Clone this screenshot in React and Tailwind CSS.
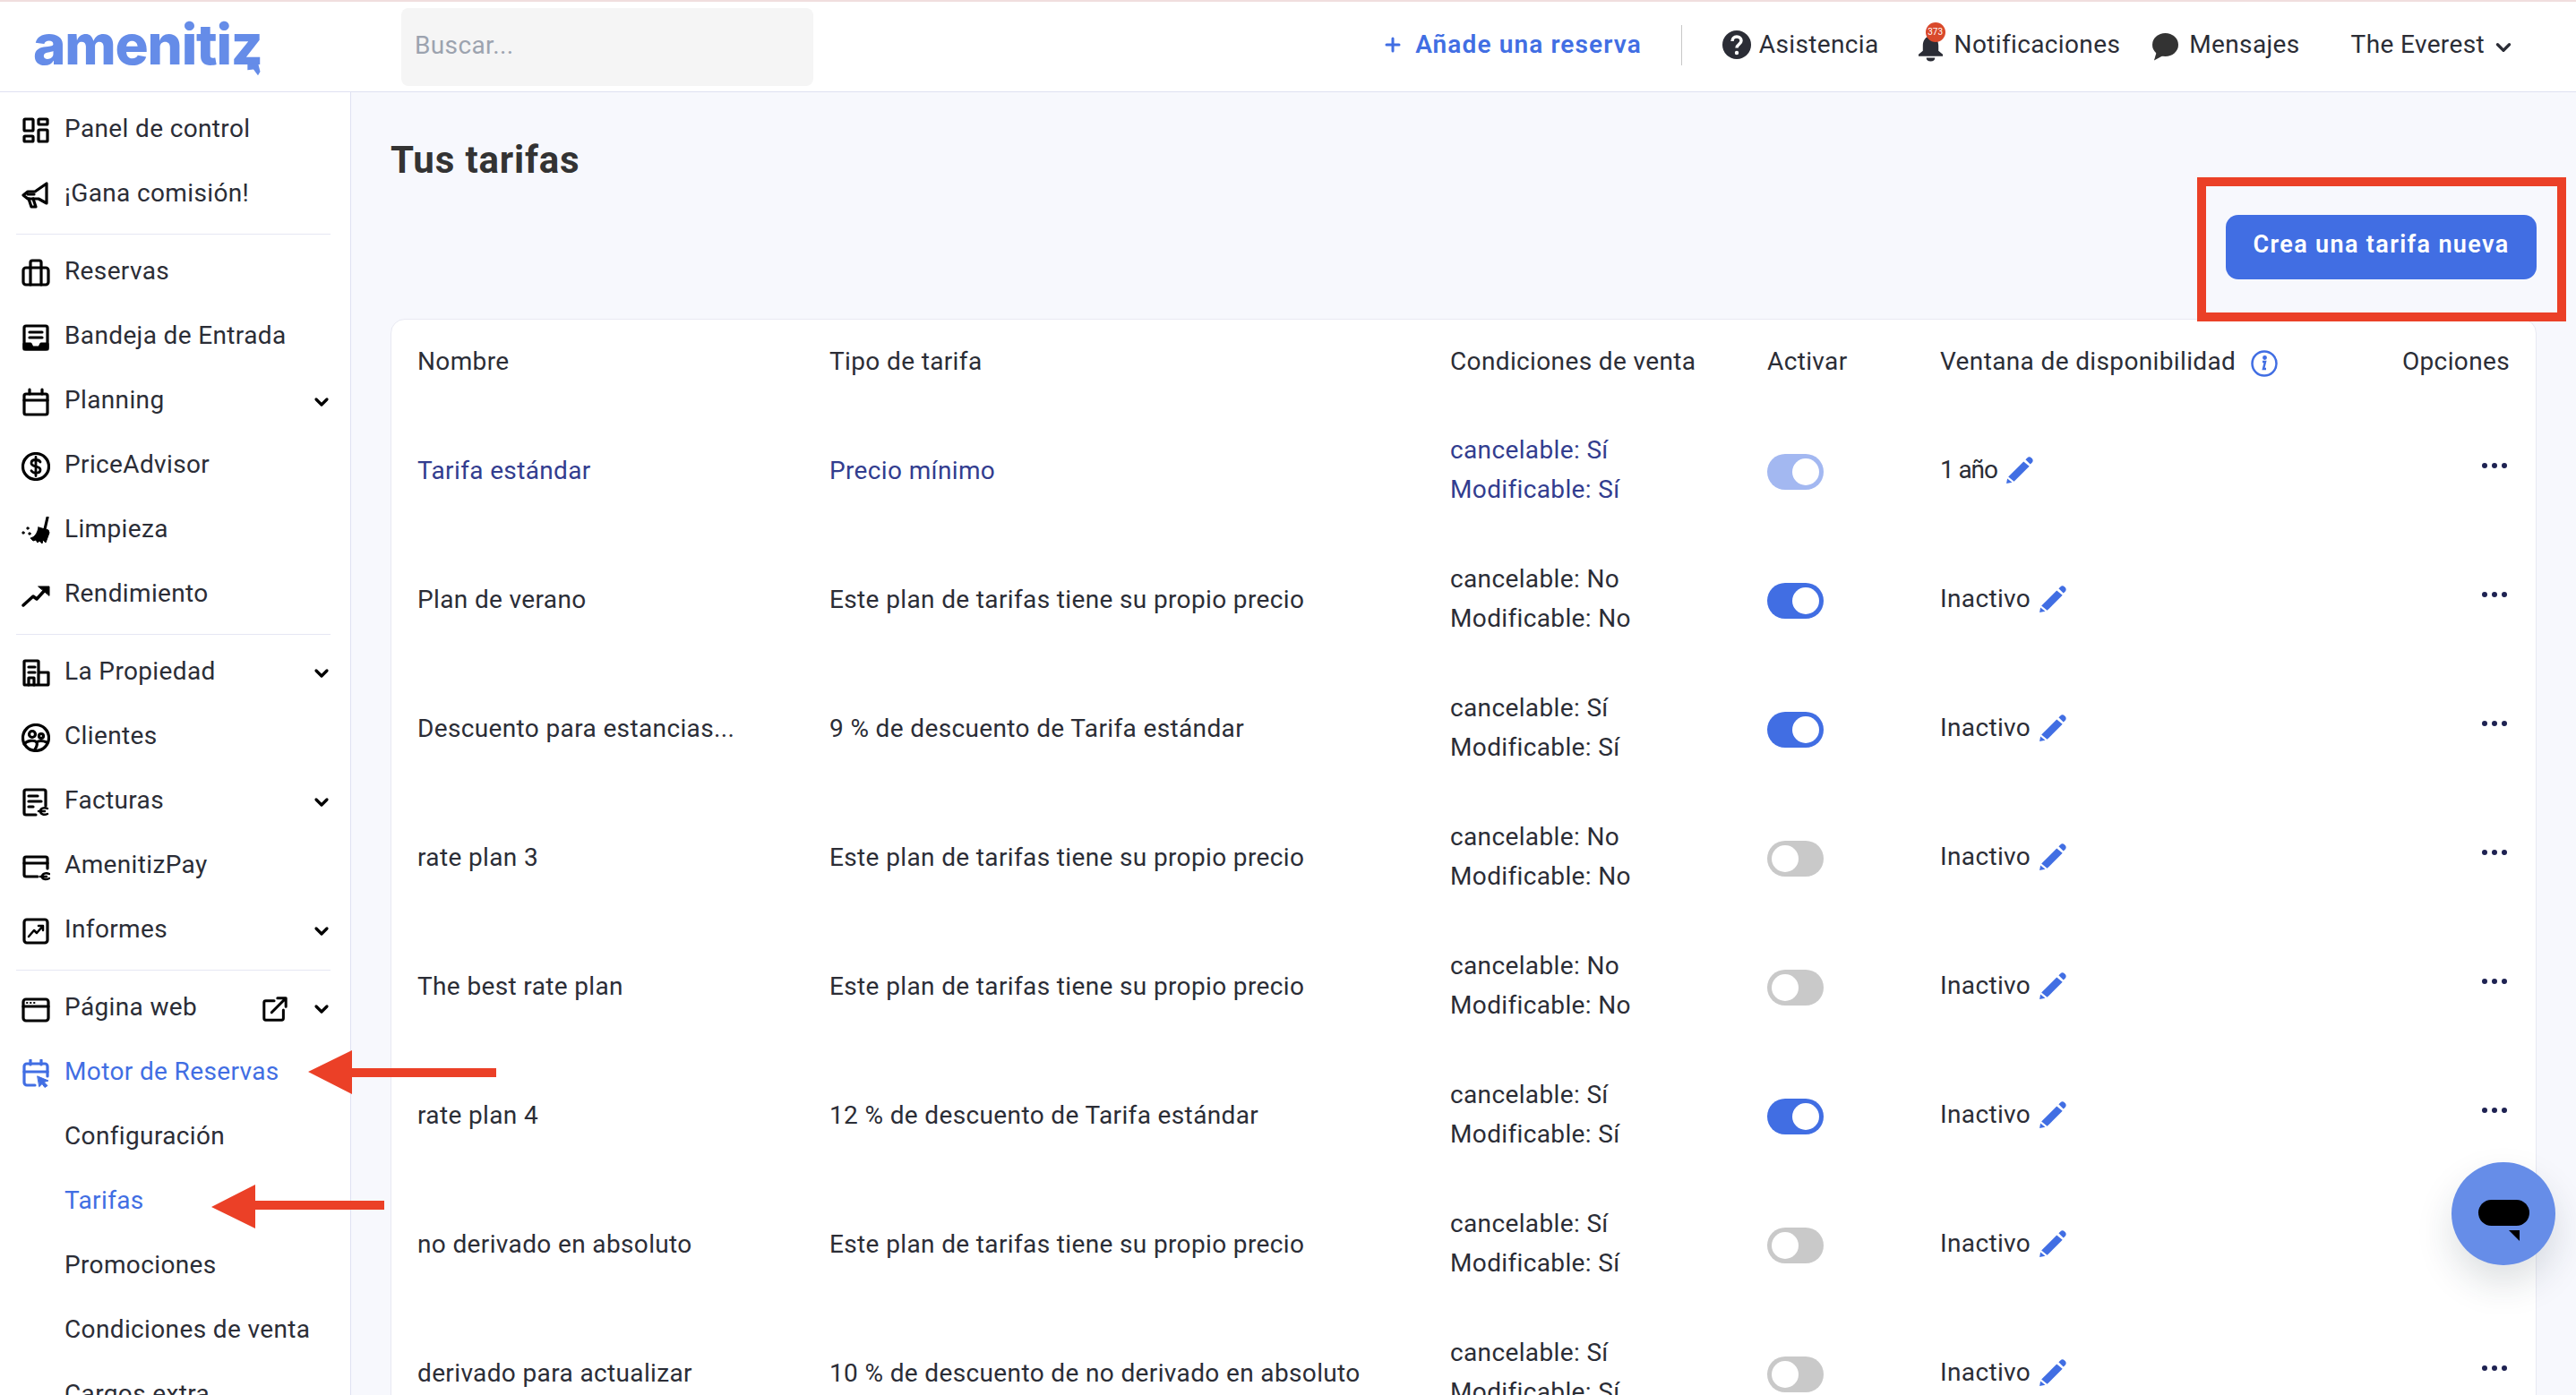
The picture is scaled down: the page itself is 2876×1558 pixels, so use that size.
import { ChevronDown, Plus } from "lucide-react"

const Icon = ({ children, className = "" }) => (
  <svg viewBox="0 0 32 32" fill="none" stroke="currentColor" strokeWidth="3.200" strokeLinejoin="round" strokeLinecap="round" className={"w-[32px] h-[32px] shrink-0 " + className}>
    {children}
  </svg>
)

const icons = {
  panel: (
    <Icon>
      <rect x="3" y="3" width="10" height="13" rx="1" />
      <rect x="19" y="3" width="10" height="6" rx="1" />
      <rect x="3" y="22" width="10" height="6" rx="1" />
      <rect x="19" y="15" width="10" height="13" rx="1" />
    </Icon>
  ),
  gana: (
    <Icon>
      <path d="M28 3v22l-9-5H7l-5-4 5-4h8z" />
      <path d="M8 20l3 9h5l-3-9" />
      <path d="M7 15h7" />
    </Icon>
  ),
  reservas: (
    <Icon>
      <rect x="2" y="10" width="28" height="19" rx="3" />
      <path d="M10 10V4a2 2 0 0 1 2-2h8a2 2 0 0 1 2 2v6M10 10v19M22 10v19" />
    </Icon>
  ),
  bandeja: (
    <Icon>
      <rect x="3" y="3" width="26" height="26" rx="2" />
      <path d="M9 10h14M9 16h14" />
      <path d="M3 23h7l2 4h8l2-4h7v6H3z" fill="currentColor" />
    </Icon>
  ),
  planning: (
    <Icon>
      <rect x="3" y="7" width="26" height="23" rx="2" />
      <path d="M3 14h26M9 2v5M23 2v5" />
    </Icon>
  ),
  price: (
    <Icon>
      <circle cx="16" cy="16" r="14.500" />
      <path d="M21 11c-1-2-3-2.500-5-2.500-3 0-5 1.500-5 3.700 0 5 10 2.500 10 7.500 0 2.200-2 3.500-5 3.500-2.500 0-4-1-5-2.500M16 5.500v21" strokeWidth="2.800" />
    </Icon>
  ),
  limpieza: (
    <Icon>
      <path d="M29 1l-3 13" />
      <path d="M19 12l11 3 1 3-4 11-3-3-1 4-3-3-2 2-2-3-3 1-3-3c5-1 8-6 9-12z" fill="currentColor" strokeWidth="1" />
      <circle cx="2" cy="18" r="1.200" fill="currentColor" strokeWidth="1" />
      <circle cx="7" cy="13" r="1.200" fill="currentColor" strokeWidth="1" />
      <circle cx="9" cy="19" r="1.200" fill="currentColor" strokeWidth="1" />
    </Icon>
  ),
  rendimiento: (
    <Icon>
      <path d="M2 27l11-10 4 3 11-12" strokeWidth="3.500" />
      <path d="M19 6h12v10z" fill="currentColor" strokeWidth="1" />
    </Icon>
  ),
  propiedad: (
    <Icon>
      <path d="M19 29V3a1 1 0 0 0-1-1H4a1 1 0 0 0-1 1v25a1 1 0 0 0 1 1h25a1 1 0 0 0 1-1V15H19" />
      <path d="M8 9h7M8 15h7M8 29v-8h6v8" />
    </Icon>
  ),
  clientes: (
    <Icon>
      <circle cx="16" cy="16" r="14.500" />
      <circle cx="12" cy="12" r="3.500" />
      <circle cx="22" cy="14" r="2.500" />
      <path d="M3 23c3-4 11-5 14-2 2-2 7-2 11 0M17 21c1 3 0 5-2 8" />
    </Icon>
  ),
  facturas: (
    <Icon>
      <path d="M27 20V4a2 2 0 0 0-2-2H5a2 2 0 0 0-2 2v24a2 2 0 0 0 2 2h11" />
      <path d="M8 9h10M8 15h14M8 21h5" />
      <path d="M29 23c-4-2-8 0-8 3s4 5 8 3M19 26h7" strokeWidth="2.500" />
    </Icon>
  ),
  pay: (
    <Icon>
      <path d="M18 27H5a2 2 0 0 1-2-2V7a2 2 0 0 1 2-2h22a2 2 0 0 1 2 2v11" />
      <path d="M3 12h26" />
      <path d="M31 24c-4-2-8 0-8 3s4 4 8 2M21 27h7" strokeWidth="2.500" />
    </Icon>
  ),
  informes: (
    <Icon>
      <rect x="3" y="3" width="26" height="26" rx="3" />
      <path d="M8 22l6-7 3 3 7-8M19 10h5v5" strokeWidth="2.500" />
    </Icon>
  ),
  web: (
    <Icon>
      <rect x="2" y="5" width="28" height="24" rx="3" />
      <path d="M2 13h28" />
      <path d="M6 9h.5M10 9h.5M14 9h.5" strokeWidth="2" />
    </Icon>
  ),
  motor: (
    <Icon>
      <path d="M15 29H6a3 3 0 0 1-3-3V8a3 3 0 0 1 3-3h20a3 3 0 0 1 3 3v11" />
      <path d="M3 14h26M10 1v5M22 1v5" />
      <path d="M18 19l12 5-5 1.500 4 4-3 2-3-4-3 3z" fill="currentColor" strokeWidth="1" />
    </Icon>
  ),
}

const SideItem = ({ icon, label, chevron, external, active, sub }) => (
  <div className={"h-[72px] flex items-center pr-[20px] " + (sub ? "pl-[72px] " : "pl-[24px] ") + (active ? "text-[#416ee3]" : "text-[#2b2d36]")}>
    {!sub && <span className={"w-[48px] flex translate-y-[3px] " + (active ? "" : "text-black")}>{icons[icon]}</span>}
    <span className="flex-1 whitespace-nowrap translate-y-[1px]">{label}</span>
    {external && (
      <svg viewBox="0 0 32 32" fill="none" stroke="black" strokeWidth="3.200" strokeLinecap="round" strokeLinejoin="round" className="w-[30px] h-[30px] mr-[25px] translate-y-[3px]">
        <path d="M15 6H5a2 2 0 0 0-2 2v19a2 2 0 0 0 2 2h19a2 2 0 0 0 2-2V17" />
        <path d="M12 20L29 3M19 3h10v10" />
      </svg>
    )}
    {chevron && <ChevronDown className="w-[24px] h-[24px] shrink-0 text-black translate-y-[3px]" strokeWidth={3.2} />}
  </div>
)

const Divider = () => <div className="h-px bg-[#e6e7f3] ml-[18px] mr-[22px] mt-[10px] mb-[4px]" />

const Pencil = () => (
  <svg viewBox="0 0 30 30" className="w-[32px] h-[32px] shrink-0 text-[#416ee3]" fill="currentColor">
    <path d="M3 22L19 6l6 5L9 27z" />
    <path d="M21 4l2-2c1-1 3-1 4 0l1 1c1 1 1 3 0 4l-2 2z" />
    <path d="M1 29l1-5 5 4z" />
  </svg>
)

const Toggle = ({ state }) => {
  const bg = state === "on" ? "bg-[#416ee3] justify-end" : state === "light" ? "bg-[#a3b8f1] justify-end" : "bg-[#c9c9c9] justify-start"
  return (
    <div className={"w-[63px] h-[40px] rounded-full flex items-center px-[5px] translate-y-[2px] " + bg}>
      <div className="w-[30px] h-[30px] rounded-full bg-white" />
    </div>
  )
}

const Dots = () => (
  <div className="flex gap-[5px] justify-end pr-[3px] -translate-y-[5px]">
    <span className="w-[6px] h-[6px] rounded-full bg-[#1e2252]" />
    <span className="w-[6px] h-[6px] rounded-full bg-[#1e2252]" />
    <span className="w-[6px] h-[6px] rounded-full bg-[#1e2252]" />
  </div>
)

const OWN = "Este plan de tarifas tiene su propio precio"

const rates = [
  { name: "Tarifa estándar", type: "Precio mínimo", cond: "Sí", toggle: "light", window: "1 año", link: true },
  { name: "Plan de verano", type: OWN, cond: "No", toggle: "on", window: "Inactivo" },
  { name: "Descuento para estancias...", type: "9 % de descuento de Tarifa estándar", cond: "Sí", toggle: "on", window: "Inactivo" },
  { name: "rate plan 3", type: OWN, cond: "No", toggle: "off", window: "Inactivo" },
  { name: "The best rate plan", type: OWN, cond: "No", toggle: "off", window: "Inactivo" },
  { name: "rate plan 4", type: "12 % de descuento de Tarifa estándar", cond: "Sí", toggle: "on", window: "Inactivo" },
  { name: "no derivado en absoluto", type: OWN, cond: "Sí", toggle: "off", window: "Inactivo" },
  { name: "derivado para actualizar", type: "10 % de descuento de no derivado en absoluto", cond: "Sí", toggle: "off", window: "Inactivo" },
]

const COLS = "grid grid-cols-[460px_693px_354px_193px_1fr] items-center pl-[29px] pr-[29px]"

export default function App() {
  return (
    <div className="relative h-screen overflow-hidden bg-[#f7f8fd] text-[#2b2d36] font-['Roboto',sans-serif] text-[28px] tracking-[0.013em]">
      <div className="h-[2px] bg-[#f0dede]" />

      {/* top bar */}
      <header className="h-[101px] bg-white border-b border-[#dfe1f2] flex items-center pr-[68px]">
        <div className="w-[448px] pl-[37px] -translate-y-[1px]">
          <span className="relative inline-block text-[#658ce8] font-['Inter',sans-serif] font-extrabold text-[62px] leading-none tracking-[-0.02em]">
            amenitiz
            <svg viewBox="0 0 24 24" className="absolute right-0 bottom-[-4px] w-[20px] h-[20px]" fill="#658ce8">
              <path d="M4 8l14-2 3 12-3 5-6-8-8 1z" />
            </svg>
          </span>
        </div>
        <div className="w-[460px] h-[87px] bg-[#f5f5f5] rounded-[8px] flex items-center pl-[15px] pb-[3px] text-[#9ca3af]">Buscar...</div>
        <div className="ml-auto flex items-center -translate-y-[2px]">
          <Plus className="w-[24px] h-[24px] text-[#416ee3] mr-[13px]" strokeWidth={3} />
          <span className="text-[#416ee3] font-semibold tracking-[0.04em] mr-[44px]">Añade una reserva</span>
          <div className="w-px h-[45px] bg-[#c8c8c8] mr-[45px]" />
          <svg viewBox="0 0 32 32" className="w-[32px] h-[32px] mr-[9px]">
            <circle cx="16" cy="16" r="16" fill="#2b2d36" />
            <path d="M11 12c0-3 2-5 5-5s5 2 5 4.500c0 4-5 4-5 8" fill="none" stroke="white" strokeWidth="3.500" />
            <circle cx="16" cy="25" r="2.200" fill="white" />
          </svg>
          <span className="mr-[43px]">Asistencia</span>
          <span className="relative mr-[12px] flex">
            <svg viewBox="0 0 30 32" className="w-[29px] h-[32px] translate-y-[3px]" fill="#2b2d36">
              <path d="M15 3c6 0 9 5 9 11v6l5 4v2H1v-2l5-4v-6c0-6 3-11 9-11z" />
              <path d="M10 28h10c0 3-2 4-5 4s-5-1-5-4z" />
            </svg>
            <span className="absolute -top-[9px] left-[9px] w-[22px] h-[22px] rounded-full bg-[#d9492b] text-white text-[10px] leading-[22px] text-center tracking-normal">373</span>
          </span>
          <span className="mr-[36px]">Notificaciones</span>
          <svg viewBox="0 0 30 32" className="w-[29px] h-[32px] mr-[12px] translate-y-[2px]" fill="#333333">
            <ellipse cx="15" cy="14" rx="15" ry="13.500" />
            <path d="M5 22L2 32l11-6z" />
          </svg>
          <span className="mr-[57px]">Mensajes</span>
          <span className="mr-[8px]">The Everest</span>
          <ChevronDown className="w-[26px] h-[26px] text-[#2b2d36] translate-y-[3px]" strokeWidth={3} />
        </div>
      </header>

      <div className="flex h-[1455px]">
        {/* sidebar */}
        <aside className="w-[392px] shrink-0 bg-white border-r border-[#dfe1f2] pt-[4px] overflow-hidden">
          <SideItem icon="panel" label="Panel de control" />
          <SideItem icon="gana" label="¡Gana comisión!" />
          <Divider />
          <SideItem icon="reservas" label="Reservas" />
          <SideItem icon="bandeja" label="Bandeja de Entrada" />
          <SideItem icon="planning" label="Planning" chevron />
          <SideItem icon="price" label="PriceAdvisor" />
          <SideItem icon="limpieza" label="Limpieza" />
          <SideItem icon="rendimiento" label="Rendimiento" />
          <Divider />
          <SideItem icon="propiedad" label="La Propiedad" chevron />
          <SideItem icon="clientes" label="Clientes" />
          <SideItem icon="facturas" label="Facturas" chevron />
          <SideItem icon="pay" label="AmenitizPay" />
          <SideItem icon="informes" label="Informes" chevron />
          <Divider />
          <SideItem icon="web" label="Página web" chevron external />
          <SideItem icon="motor" label="Motor de Reservas" active />
          <SideItem sub label="Configuración" />
          <SideItem sub label="Tarifas" active />
          <SideItem sub label="Promociones" />
          <SideItem sub label="Condiciones de venta" />
          <SideItem sub label="Cargos extra" />
        </aside>

        {/* main */}
        <main className="flex-1 min-w-0 px-[44px] overflow-hidden">
          <h1 className="pt-[56px] text-[42px] leading-[40px] font-bold text-[#333333] tracking-[0.02em]">Tus tarifas</h1>
          <div className="flex justify-end mt-[41px] mb-[44px]">
            <div className="relative z-10">
              <button className="w-[347px] h-[72px] rounded-[14px] bg-[#416ee3] text-white font-semibold text-[27px] tracking-[0.05em] pb-[5px]">Crea una tarifa nueva</button>
              <div className="absolute -left-[32px] -right-[33px] -top-[42px] -bottom-[47px] border-[10px] border-[#eb4027] pointer-events-none" />
            </div>
          </div>

          <div className="bg-white border border-[#e8e9f2] rounded-t-[16px]">
            <div className={COLS + " h-[94px] mb-[2px]"}>
              <div>Nombre</div>
              <div>Tipo de tarifa</div>
              <div>Condiciones de venta</div>
              <div>Activar</div>
              <div className="flex items-center justify-between">
                <span className="flex items-center gap-[17px]">
                  Ventana de disponibilidad
                  <svg viewBox="0 0 30 30" className="w-[30px] h-[30px] translate-y-[2px]" fill="none" stroke="#416ee3" strokeWidth="2.500">
                    <circle cx="15" cy="15" r="13.500" />
                    <path d="M13 13h3l-2 8h3" strokeWidth="2.500" />
                    <circle cx="15.500" cy="8.500" r="1.200" fill="#416ee3" />
                  </svg>
                </span>
                <span>Opciones</span>
              </div>
            </div>
            {rates.map((r, i) => (
              <div key={i} className={COLS + " h-[144px] " + (r.link ? "text-[#323d8f]" : "")}>
                <div className="whitespace-nowrap translate-y-[1px]">{r.name}</div>
                <div className="whitespace-nowrap translate-y-[1px]">{r.type}</div>
                <div className="leading-[44px]">
                  <div>cancelable: {r.cond}</div>
                  <div>Modificable: {r.cond}</div>
                </div>
                <div><Toggle state={r.toggle} /></div>
                <div className="flex items-center justify-between text-[#2b2d36]">
                  <span className="flex items-center gap-[9px]">
                    <span className={r.link ? "tracking-[-0.04em]" : ""}>{r.window}</span>
                    <Pencil />
                  </span>
                  <Dots />
                </div>
              </div>
            ))}
          </div>
        </main>
      </div>

      {/* annotation arrows */}
      <svg viewBox="0 0 600 300" className="absolute left-0 top-[1130px] w-[600px] h-[300px] pointer-events-none" fill="#eb4027">
        <path d="M344 67L393 43V63H554V73H393V92z" />
        <path d="M236 218L285 193V211H429V221H285V242z" />
      </svg>

      {/* chat bubble */}
      <div className="absolute left-[2737px] top-[1298px] w-[116px] h-[115px] rounded-full bg-[#668de8] shadow-[0_20px_40px_rgba(30,50,60,0.15)] flex items-center justify-center">
        <div className="relative w-[57px] h-[29px] rounded-full bg-black -translate-y-[1px]">
          <svg viewBox="0 0 12 12" className="absolute left-[34px] top-[34px] w-[12px] h-[12px]" fill="black">
            <path d="M0 0h12v12z" />
          </svg>
        </div>
      </div>
    </div>
  )
}
